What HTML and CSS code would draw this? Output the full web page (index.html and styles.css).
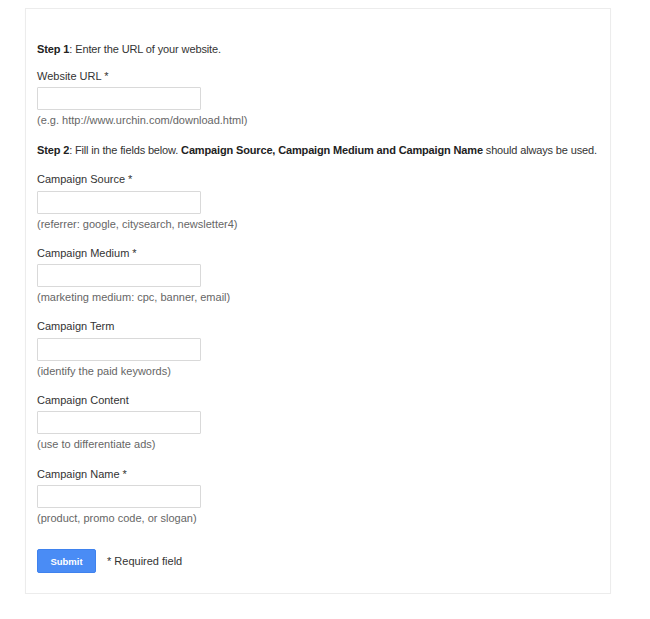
FILE: index.html
```html
<!DOCTYPE html>
<html lang="en">
<head>
<meta charset="utf-8">
<title>URL Builder</title>
<link rel="stylesheet" href="styles.css">
</head>
<body>
<div class="card">
  <form class="form">
    <p class="step step1"><b>Step 1</b>: Enter the URL of your website.</p>
    <div class="field first">
      <label class="label">Website URL *</label>
      <input class="input" type="text">
      <span class="hint">(e.g. http://www.urchin.com/download.html)</span>
    </div>
    <p class="step step2"><b>Step 2</b>: Fill in the fields below. <b>Campaign Source, Campaign Medium and Campaign Name</b> should always be used.</p>
    <div class="field after-step">
      <label class="label">Campaign Source *</label>
      <input class="input" type="text">
      <span class="hint">(referrer: google, citysearch, newsletter4)</span>
    </div>
    <div class="field">
      <label class="label">Campaign Medium *</label>
      <input class="input" type="text">
      <span class="hint">(marketing medium: cpc, banner, email)</span>
    </div>
    <div class="field">
      <label class="label">Campaign Term</label>
      <input class="input" type="text">
      <span class="hint">(identify the paid keywords)</span>
    </div>
    <div class="field">
      <label class="label">Campaign Content</label>
      <input class="input" type="text">
      <span class="hint">(use to differentiate ads)</span>
    </div>
    <div class="field">
      <label class="label">Campaign Name *</label>
      <input class="input" type="text">
      <span class="hint">(product, promo code, or slogan)</span>
    </div>
    <div class="actions">
      <button class="submit" type="button">Submit</button>
      <span class="required">* Required field</span>
    </div>
  </form>
</div>
</body>
</html>
```
FILE: styles.css
```css
html, body {
  margin: 0;
  padding: 0;
  background: #ffffff;
}
body {
  font-family: "Liberation Sans", Arial, Helvetica, sans-serif;
  font-size: 11px;
  line-height: 14px;
  color: #333333;
}
.card {
  box-sizing: border-box;
  width: 586px;
  margin: 8px 0 0 25px;
  border: 1px solid #ececec;
  box-shadow: 0 1px 1px rgba(0, 0, 0, 0.04);
  padding: 33px 11px 20px 11px;
}
.form {
  display: flex;
  flex-direction: column;
}
.step {
  margin: 0;
  color: #333333;
  white-space: nowrap;
}
.step b {
  color: #222222;
}
.step1 {
  letter-spacing: -0.12px;
}
.step2 {
  margin-top: 16px;
  letter-spacing: -0.15px;
}
.field {
  display: flex;
  flex-direction: column;
  align-items: flex-start;
  margin-top: 15.1px;
}
.field.first {
  margin-top: 12.7px;
}
.field.after-step {
  margin-top: 15px;
}
.label {
  display: block;
  margin-bottom: 4.5px;
  color: #333333;
}
.input {
  box-sizing: border-box;
  width: 164px;
  height: 23px;
  margin: 0;
  padding: 2px 4px;
  border: 1px solid #d9d9d9;
  border-radius: 1px;
  background: #ffffff;
  font: inherit;
  outline: none;
}
.hint {
  display: block;
  margin-top: 3px;
  color: #666666;
}
.actions {
  display: flex;
  align-items: center;
  gap: 11px;
  margin-top: 24px;
}
.submit {
  box-sizing: border-box;
  width: 59px;
  height: 24px;
  margin: 0;
  padding: 0;
  border: 1px solid #3f82ee;
  border-radius: 2px;
  background: #4a8cf5;
  color: #ffffff;
  font-family: "Liberation Sans", Arial, Helvetica, sans-serif;
  font-size: 9.5px;
  font-weight: bold;
  cursor: pointer;
}
.required {
  color: #333333;
}
```
